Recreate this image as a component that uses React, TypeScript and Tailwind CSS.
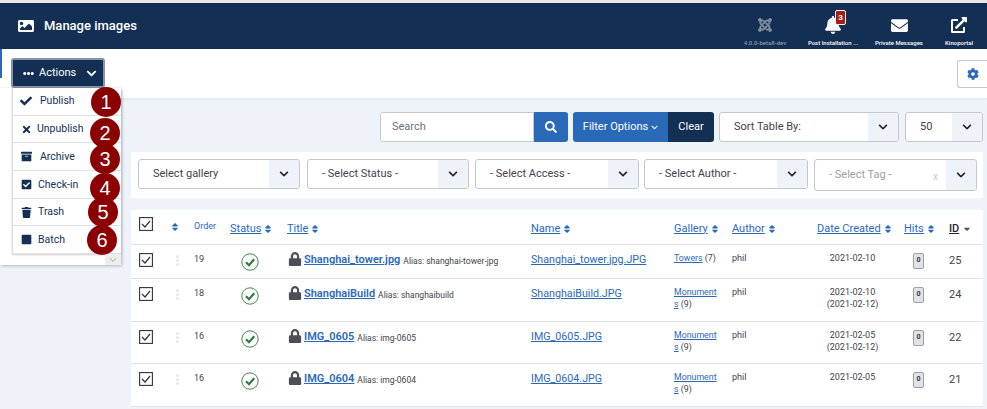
import React from "react";
import {
  FaArchive,
  FaBell,
  FaCheck,
  FaCheckSquare,
  FaChevronDown,
  FaCog,
  FaEllipsisH,
  FaEnvelope,
  FaExternalLinkAlt,
  FaImage,
  FaJoomla,
  FaLock,
  FaSearch,
  FaSort,
  FaSortDown,
  FaSquare,
  FaTimes,
  FaTrash,
} from "react-icons/fa";

const menuItems = [
  { label: "Publish", icon: <FaCheck size={12} />, pad: "gap-[8px]" },
  { label: "Unpublish", icon: <FaTimes size={11} />, pad: "gap-[5px]" },
  { label: "Archive", icon: <FaArchive size={11} />, pad: "gap-[8px]" },
  { label: "Check-in", icon: <FaCheckSquare size={11} />, pad: "gap-[6px]" },
  { label: "Trash", icon: <FaTrash size={11} />, pad: "gap-[6px]" },
  { label: "Batch", icon: <FaSquare size={11} />, pad: "gap-[6px]" },
];

const rows = [
  {
    order: 19,
    title: "Shanghai_tower.jpg",
    alias: "shanghai-tower-jpg",
    name: "Shanghai_tower.jpg.JPG",
    gallery: "Towers",
    count: 7,
    date: "2021-02-10",
    modified: "",
    id: 25,
    height: "h-[34px]",
  },
  {
    order: 18,
    title: "ShanghaiBuild",
    alias: "shanghaibuild",
    name: "ShanghaiBuild.JPG",
    gallery: "Monuments",
    count: 9,
    date: "2021-02-10",
    modified: "(2021-02-12)",
    id: 24,
    height: "h-[43px]",
  },
  {
    order: 16,
    title: "IMG_0605",
    alias: "img-0605",
    name: "IMG_0605.JPG",
    gallery: "Monuments",
    count: 9,
    date: "2021-02-05",
    modified: "(2021-02-12)",
    id: 22,
    height: "h-[42px]",
  },
  {
    order: 16,
    title: "IMG_0604",
    alias: "img-0604",
    name: "IMG_0604.JPG",
    gallery: "Monuments",
    count: 9,
    date: "2021-02-05",
    modified: "",
    id: 21,
    height: "h-[43px]",
  },
];

const Select = ({ label, width, faded }: { label: string; width: string; faded?: boolean }) => (
  <div
    className={`flex ${faded ? "h-[32px]" : "h-[30px]"} ${width} shrink-0 items-stretch overflow-hidden rounded-[3px] border border-[#c4c8cc] bg-white`}
  >
    <span
      className={`flex flex-1 items-center justify-between pl-[14px] pr-[8px] text-[11px] ${faded ? "text-[#9a9ea3]" : "text-[#3f444a]"}`}
    >
      {label}
      {faded && <span className="pt-[3px] text-[10px] text-[#c4c8cc]">x</span>}
    </span>
    <span className="flex w-[30px] items-center justify-center bg-[#eef3fa] text-[#22262a]">
      <FaChevronDown size={10} />
    </span>
  </div>
);

const Checkbox = () => (
  <svg width="14" height="14" viewBox="0 0 14 14" className="block">
    <rect x="0.6" y="0.6" width="12.8" height="12.8" fill="white" stroke="#333" strokeWidth="1.1" />
    <path d="M3 7l3 3 5-6" fill="none" stroke="#333" strokeWidth="1.2" />
  </svg>
);

const StatusIcon = () => (
  <svg width="18" height="18" viewBox="0 0 18 18" className="block">
    <circle cx="9" cy="9" r="8.2" fill="white" stroke="#3f8a4d" strokeWidth="1" />
    <path d="M5 9.2l3 3 5.2-6" fill="none" stroke="#2f7d3e" strokeWidth="2.2" />
  </svg>
);

const SortHead = ({ label, className }: { label: string; className?: string }) => (
  <span className={`inline-flex items-center gap-[2px] text-[11px] text-[#2a69b8] ${className ?? ""}`}>
    <span className="underline">{label}</span>
    <FaSort size={10} />
  </span>
);

const HeaderLink = ({
  icon,
  label,
  width,
  muted,
}: {
  icon: React.ReactNode;
  label: string;
  width: string;
  muted?: boolean;
}) => (
  <div className={`flex ${width} flex-col items-center pt-[12px]`}>
    <div className={`relative flex h-[20px] items-center ${muted ? "text-[#7f8b9c]" : "text-white"}`}>{icon}</div>
    <span className={`mt-[3px] text-[6px] leading-[9px] font-medium whitespace-nowrap ${muted ? "text-[#8e99a8]" : "text-white"}`}>
      {label}
    </span>
  </div>
);

const App: React.FC = () => {
  return (
    <div className="relative h-[409px] w-[987px] overflow-hidden bg-[#eef3fa] font-['Roboto',sans-serif]">
      <div className="h-[3px] bg-[#e8e8ea]" />

      {/* top bar */}
      <header className="flex h-[46px] items-start justify-between bg-[#132f53]">
        <div className="flex items-center pt-[14px] pl-[18px] text-white">
          <FaImage size={16} />
          <span className="ml-[10px] text-[13px] leading-[18px] font-medium">Manage images</span>
        </div>
        <div className="flex pr-[1px]">
          <HeaderLink muted width="w-[70px]" label="4.0.0-beta8-dev" icon={<FaJoomla size={16} />} />
          <HeaderLink
            width="w-[66px]"
            label="Post Installation ..."
            icon={
              <>
                <FaBell size={18} />
                <span className="absolute top-[-5px] left-[11px] flex h-[15px] w-[11px] items-center justify-center rounded-[2px] border border-white bg-[#a51f18] text-[8px] font-bold text-white">
                  3
                </span>
              </>
            }
          />
          <HeaderLink width="w-[66px]" label="Private Messages" icon={<FaEnvelope size={17} />} />
          <HeaderLink width="w-[54px]" label="Kinoportal" icon={<FaExternalLinkAlt size={16} />} />
        </div>
      </header>

      {/* toolbar */}
      <div className="flex h-[49px] items-start justify-between bg-white shadow-[0_1px_3px_rgba(0,0,0,0.06)]">
        <div className="flex items-start">
          <div className="h-[29px] w-[2px] bg-[#2a69b8]" />
          <div className="ml-[9px] mt-[9px] flex h-[30px] w-[94px] items-center gap-[5px] rounded-[3px] border-2 border-[#8593a6] bg-[#132f53] pl-[10px] text-[11px] text-white">
            <FaEllipsisH size={11} />
            <span>Actions</span>
            <FaChevronDown size={11} className="ml-[5px]" />
          </div>
        </div>
        <div className="mt-[11px] flex h-[28px] w-[30px] items-center justify-center rounded-l-[3px] border border-r-0 border-[#c4c8cc] bg-white text-[#2a69b8]">
          <FaCog size={12} />
        </div>
      </div>

      {/* main column */}
      <main className="ml-[131px] w-[852px]">
        <div className="flex justify-end gap-[5px] pt-[14px]">
          <div className="flex h-[30px] w-[188px] overflow-hidden rounded-[3px]">
            <span className="flex flex-1 items-center rounded-l-[3px] border border-[#c4c8cc] bg-white pl-[11px] text-[11px] text-[#6d7278]">
              Search
            </span>
            <span className="flex w-[34px] items-center justify-center bg-[#2a69b8] text-white">
              <FaSearch size={12} />
            </span>
          </div>
          <div className="flex h-[30px] overflow-hidden rounded-[3px] text-[11px] text-white">
            <span className="flex w-[95px] items-center justify-center gap-[3px] bg-[#2a69b8]">
              Filter Options
              <FaChevronDown size={7} />
            </span>
            <span className="flex w-[46px] items-center justify-center bg-[#132f53]">Clear</span>
          </div>
          <Select label="Sort Table By:" width="w-[180px]" />
          <div className="ml-[1px]">
            <Select label="50" width="w-[78px]" />
          </div>
        </div>

        <div className="mt-[10px] flex h-[46px] items-start gap-[6px] bg-white pt-[7px] pl-[7px]">
          <Select label="Select gallery" width="w-[162px]" />
          <Select label="- Select Status -" width="w-[162px] ml-[1px]" />
          <Select label="- Select Access -" width="w-[164px]" />
          <Select label="- Select Author -" width="w-[164px] -ml-[1px]" />
          <Select faded label="- Select Tag -" width="w-[163px]" />
        </div>

        <table className="mt-[12px] w-full table-fixed border-collapse bg-white">
          <colgroup>
            <col className="w-[36px]" />
            <col className="w-[23px]" />
            <col className="w-[36px]" />
            <col className="w-[57px]" />
            <col className="w-[244px]" />
            <col className="w-[143px]" />
            <col className="w-[58px]" />
            <col className="w-[85px]" />
            <col className="w-[87px]" />
            <col className="w-[45px]" />
            <col className="w-[38px]" />
          </colgroup>
          <thead>
            <tr className="h-[34px] border-b border-[#dfe3e7] text-left font-normal">
              <th className="pb-[6px] pl-[8px] font-normal">
                <Checkbox />
              </th>
              <th className="pl-[3px] font-normal text-[#2a69b8]">
                <FaSort size={10} />
              </th>
              <th className="pl-[4px] text-[9px] font-normal text-[#2a69b8]">Order</th>
              <th className="pl-[4px] font-normal">
                <SortHead label="Status" />
              </th>
              <th className="pl-[4px] font-normal">
                <SortHead label="Title" />
              </th>
              <th className="pl-[4px] font-normal">
                <SortHead label="Name" />
              </th>
              <th className="pl-[4px] font-normal">
                <SortHead label="Gallery" className="whitespace-nowrap" />
              </th>
              <th className="pl-[4px] font-normal">
                <SortHead label="Author" />
              </th>
              <th className="pl-[4px] font-normal whitespace-nowrap">
                <SortHead label="Date Created" />
              </th>
              <th className="pl-[4px] font-normal">
                <SortHead label="Hits" />
              </th>
              <th className="pl-[4px] font-normal">
                <span className="inline-flex items-center gap-[3px] text-[11px] font-medium text-[#22262a]">
                  <span className="underline">ID</span>
                  <FaSortDown size={10} className="-mt-[4px] text-[#555]" />
                </span>
              </th>
            </tr>
          </thead>
          <tbody className="text-[#3f444a]">
            {rows.map((row) => (
              <tr key={row.id} className={`${row.height} border-b border-[#dfe3e7] align-top`}>
                <td className="pt-[8px] pl-[8px]">
                  <Checkbox />
                </td>
                <td className="pt-[10px] pl-[9px]">
                  <div className="flex w-[3px] flex-col gap-[1px]">
                    <span className="h-[3px] rounded-full bg-[#e6e8ea]" />
                    <span className="h-[3px] rounded-full bg-[#e6e8ea]" />
                    <span className="h-[3px] rounded-full bg-[#e6e8ea]" />
                  </div>
                </td>
                <td className="pt-[8px] pl-[4px] text-[9px] leading-[12px]">{row.order}</td>
                <td className="pt-[8px] pl-[15px]">
                  <StatusIcon />
                </td>
                <td className="pt-[7px] pl-[5px]">
                  <span className="flex items-start whitespace-nowrap">
                    <FaLock size={14} className="text-[#4b5058]" />
                    <a className="ml-[2px] text-[11px] leading-[16px] font-semibold text-[#2a69b8] underline">{row.title}</a>
                    <span className="ml-[3px] pt-[1px] text-[8.5px] leading-[16px]">Alias: {row.alias}</span>
                  </span>
                </td>
                <td className="pt-[7px] pl-[4px] text-[10.7px] leading-[16px] whitespace-nowrap text-[#2a69b8] underline">
                  {row.name}
                </td>
                <td className="pt-[7px] pl-[4px] text-[8.8px] leading-[12px]">
                  <div className="w-[44px] break-all">
                    <a className="text-[#2a69b8] underline">{row.gallery}</a> ({row.count})
                  </div>
                </td>
                <td className="pt-[7px] pl-[4px] text-[9px] leading-[12px]">phil</td>
                <td className="pt-[7px] pr-[8px] text-center text-[9px] leading-[12px] whitespace-nowrap">
                  <div>{row.date}</div>
                  {row.modified && <div>{row.modified}</div>}
                </td>
                <td className="pt-[8px] pl-[13px]">
                  <span className="flex h-[16px] w-[11px] items-center justify-center rounded-[2px] border border-[#9aa0a6] bg-[#dfe3e7] text-[7px] font-bold text-[#333]">
                    0
                  </span>
                </td>
                <td className="pt-[8px] pl-[4px] text-[11px] leading-[16px]">{row.id}</td>
              </tr>
            ))}
          </tbody>
        </table>
      </main>

      {/* open Actions dropdown */}
      <div className="absolute top-[88px] left-0 h-[177px] w-[121px] bg-white shadow-[1px_1px_3px_rgba(0,0,0,0.25)]">
        <ul className="ml-[12px] h-[166px] border-l border-[#d9dce0] shadow-[0_1px_2px_rgba(0,0,0,0.2)]">
          {menuItems.map((item) => (
            <li
              key={item.label}
              className={`flex h-[27.7px] items-center border-b border-[#dfe1e4] pl-[7px] text-[10.5px] text-[#132f53] ${item.pad}`}
            >
              <span className="flex w-[12px] justify-center">{item.icon}</span>
              <span>{item.label}</span>
            </li>
          ))}
        </ul>
        <div className="absolute right-0 bottom-0 flex h-[11px] w-[16px] items-center justify-center bg-[#eeeeee] text-[#c4c4c4]">
          <FaChevronDown size={8} />
        </div>
      </div>

      {/* numbered callouts */}
      {[
        { n: 1, pos: "top-[87px] left-[91px]" },
        { n: 2, pos: "top-[118px] left-[90px]" },
        { n: 3, pos: "top-[144px] left-[90px]" },
        { n: 4, pos: "top-[173px] left-[90px]" },
        { n: 5, pos: "top-[197px] left-[88px]" },
        { n: 6, pos: "top-[225px] left-[87px]" },
      ].map((c) => (
        <span
          key={c.n}
          className={`absolute ${c.pos} flex h-[30px] w-[30px] items-center justify-center rounded-full bg-[#8b0000] font-['Liberation_Sans',sans-serif] text-[20px] text-white`}
        >
          {c.n}
        </span>
      ))}
    </div>
  );
};

export default App;
